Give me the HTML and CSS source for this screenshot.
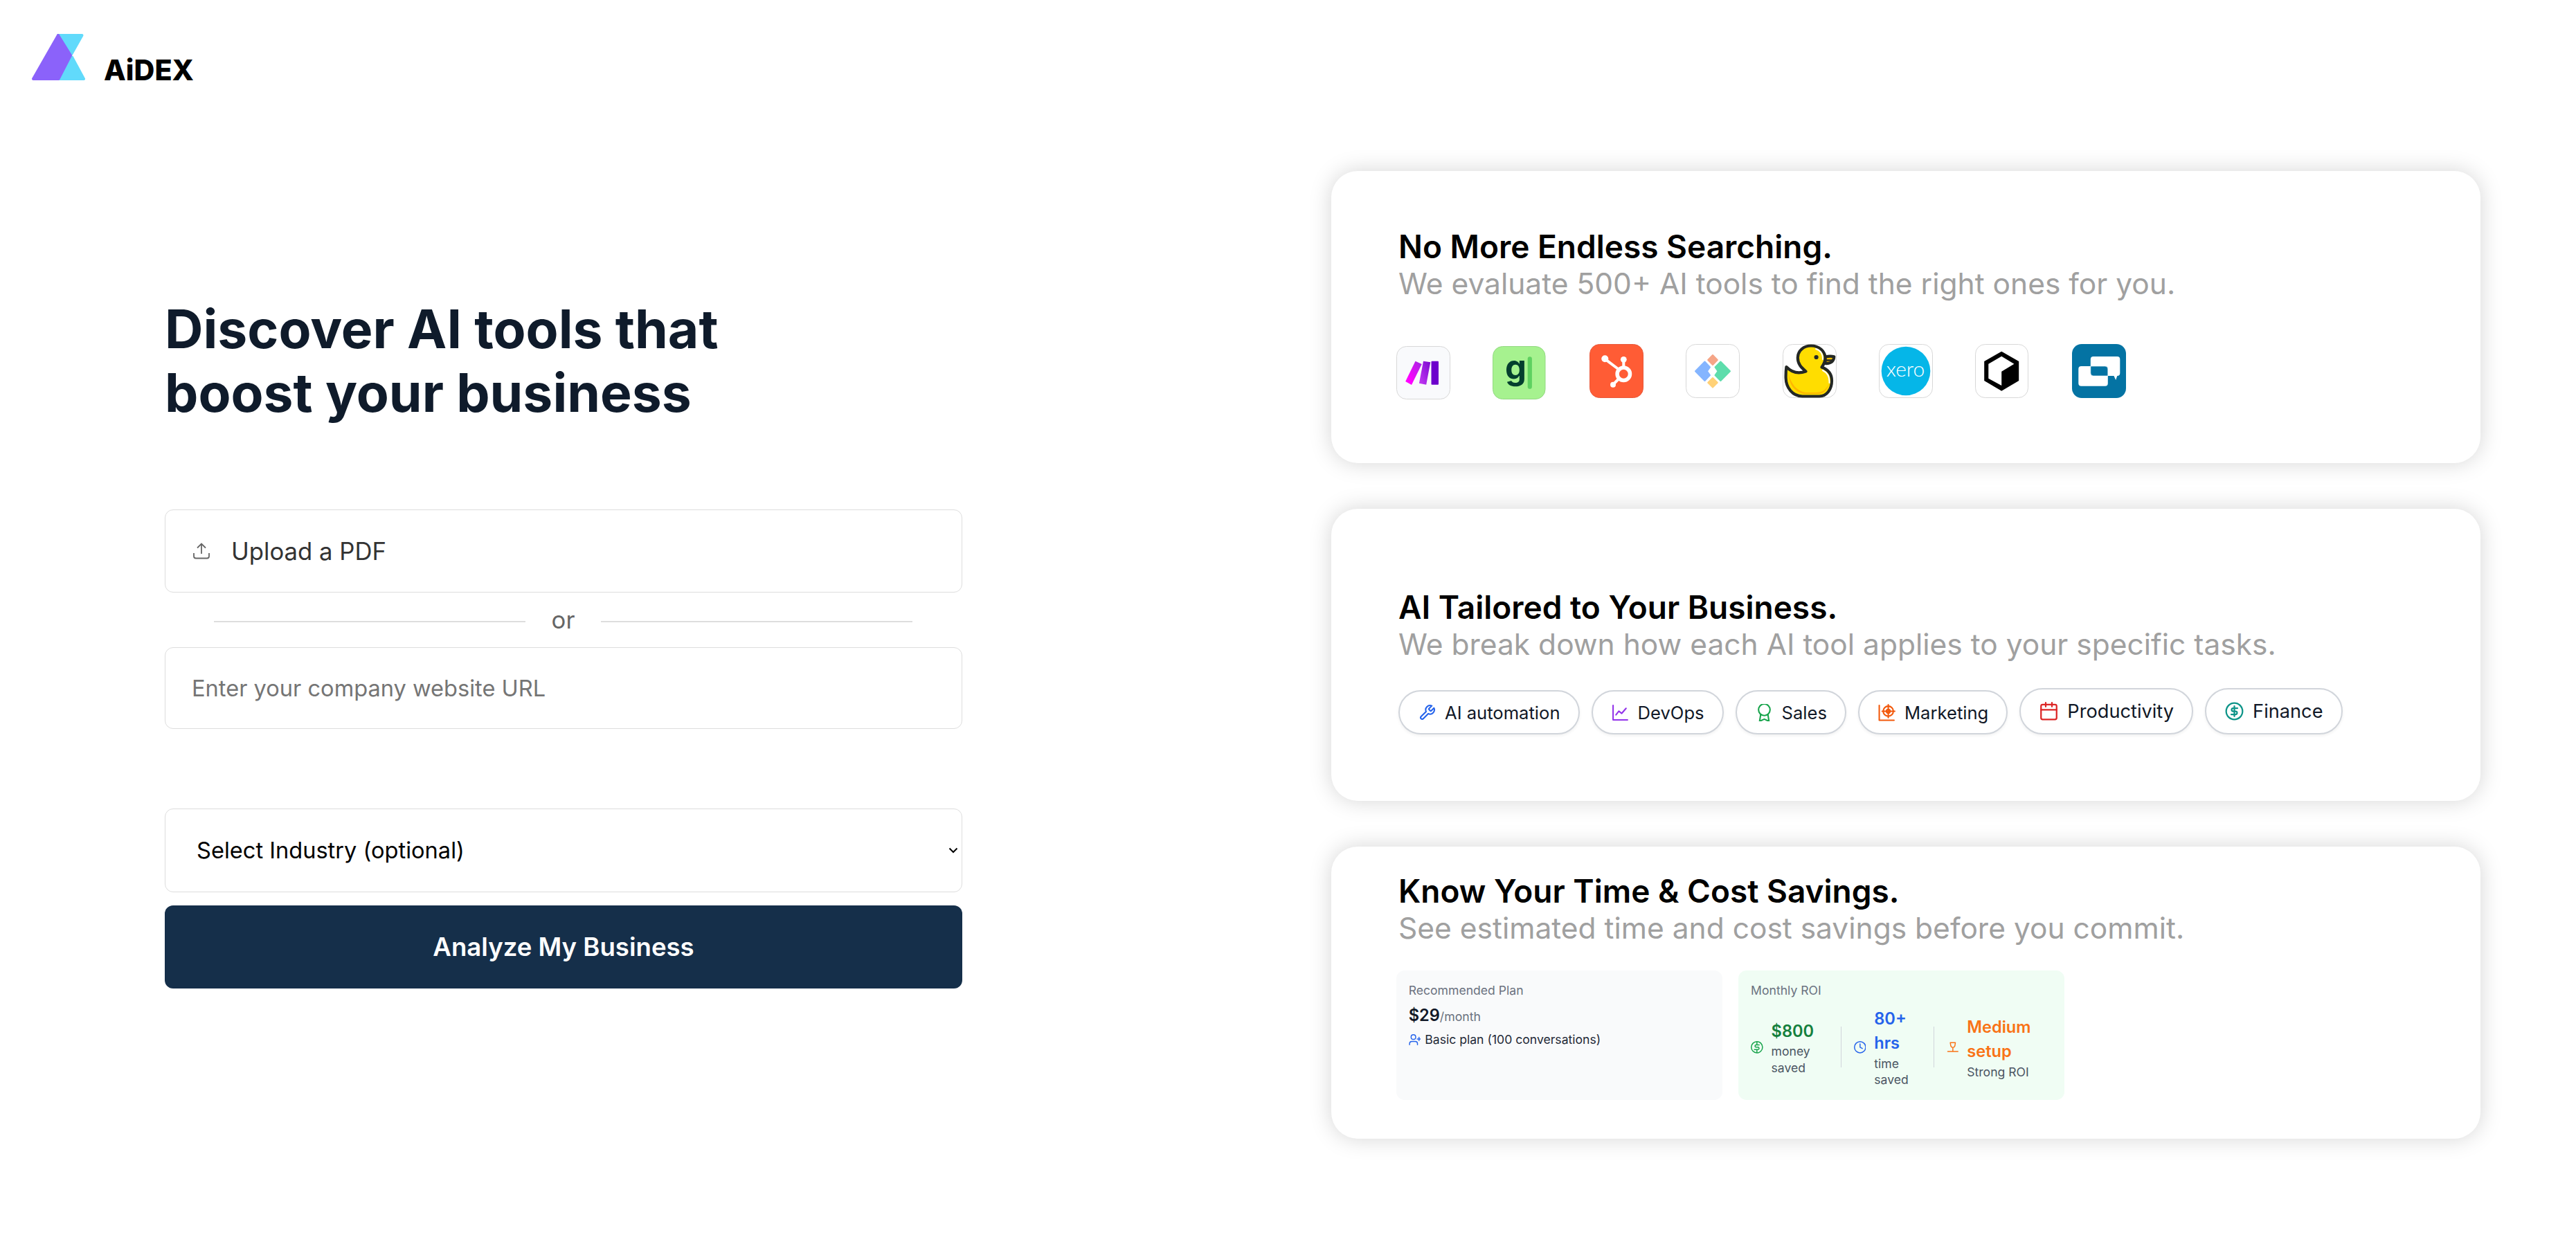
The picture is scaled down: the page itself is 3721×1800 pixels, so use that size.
FILE: index.html
```html
<!DOCTYPE html>
<html lang="en">
<head>
    <meta charset="UTF-8">
    <title>AiDEX</title>
    <link rel="stylesheet" href="styles.css">
</head>
<body>
    <header class="header">
        <svg class="brand-mark" viewBox="0 0 77 67">
            <path class="cyan" d="M38 2H72.5L57 29.5Z"/>
            <path class="cyan" d="M58 33.5L75 65H40Z"/>
            <path class="purple" d="M38 2L56 31L38.5 65H2Z"/>
        </svg>
        <span class="brand-name">AiDEX</span>
    </header>

    <main class="page">
        <section class="hero">
            <h1>Discover AI tools that<br>boost your business</h1>
            <form class="form">
                <label class="field upload">
                    <svg class="upload-icon" viewBox="0 0 24 24">
                        <path d="M1 15v4.5a3 3 0 0 0 3 3h16a3 3 0 0 0 3-3V15M12 16V1.5M6 7.5l6-6 6 6"/>
                    </svg>
                    <span>Upload a PDF</span>
                </label>
                <div class="divider"><span>or</span></div>
                <input class="field url" type="text" placeholder="Enter your company website URL">
                <div class="field select">
                    <span>Select Industry (optional)</span>
                    <svg class="arrow" viewBox="0 0 14 9"><path d="M1.5 1.5L7 7l5.5-5.5"/></svg>
                </div>
                <button class="submit" type="button">Analyze My Business</button>
            </form>
        </section>

        <section class="cards">
            <article class="card card-search">
                <h2>No More Endless Searching.</h2>
                <p class="sub">We evaluate 500+ AI tools to find the right ones for you.</p>
                <div class="logos">
                    <svg class="logo low" viewBox="0 0 78 77">
                        <defs>
                            <linearGradient id="make1" x1="0" y1="1" x2="1" y2="0"><stop offset=".25" stop-color="#ff00ff"/><stop offset="1" stop-color="#a02be0"/></linearGradient>
                            <linearGradient id="make2" x1="0" y1="1" x2="1" y2="0"><stop offset="0" stop-color="#c63cf5"/><stop offset="1" stop-color="#7a08cf"/></linearGradient>
                        </defs>
                        <rect class="tile" x=".5" y=".5" width="77" height="76" rx="14" fill="#f9fafc"/>
                        <path fill="url(#make1)" d="M27.5 21.7L36.8 26L22 56L13.2 51Z"/>
                        <path fill="url(#make2)" d="M39 21.7L49.3 23.3L43.2 55.7L32.9 53.7Z"/>
                        <rect x="50.5" y="21.7" width="10.5" height="34" rx="1" fill="#6d00cc"/>
                    </svg>
                    <svg class="logo low" viewBox="0 0 78 77">
                        <rect x=".5" y=".5" width="75.5" height="76" rx="14" fill="#a6f28f" stroke="#93d982"/>
                        <text class="logo-g" x="18" y="48">g</text>
                        <rect x="50.7" y="15.3" width="6.2" height="46.5" rx="3.1" fill="#5ed160"/>
                    </svg>
                    <svg class="logo" viewBox="0 0 78 78">
                        <rect x=".5" y=".5" width="77" height="77" rx="14" fill="#ff5c35" stroke="#e8583a"/>
                        <path d="M22 21.3L42 36.5M49.3 22.3V34M42.5 50L34 58.7" fill="none" stroke="#fff" stroke-width="4"/>
                        <circle cx="49.3" cy="43.3" r="9.2" fill="none" stroke="#fff" stroke-width="5.5"/>
                        <g fill="#fff"><circle cx="22.3" cy="21.3" r="5"/><circle cx="49.3" cy="22.3" r="4.4"/><circle cx="34" cy="58.7" r="4"/></g>
                    </svg>
                    <svg class="logo" viewBox="0 0 78 78">
                        <rect class="tile" x=".5" y=".5" width="77" height="77" rx="14" fill="#fff"/>
                        <g stroke-width="2" stroke-linejoin="round">
                            <path fill="#f5a587" stroke="#f5a587" d="M39 16L45.8 23L39 30L32.2 23Z"/>
                            <path fill="#ffd177" stroke="#ffd177" d="M39 49L45.8 55.8L39 62.6L32.2 55.8Z"/>
                            <path fill="#85b5ff" stroke="#85b5ff" d="M27.5 25.5L35 33.5L31 39.3L35 45L27.5 53L14 39.3Z"/>
                            <path fill="#5eddac" stroke="#5eddac" d="M50.4 25.5L64 39.3L50.4 53L42.5 45L46.5 39.3L42.5 33.5Z"/>
                        </g>
                    </svg>
                    <svg class="logo" viewBox="0 0 78 78">
                        <rect class="tile" x=".5" y=".5" width="77" height="77" rx="14" fill="#fff"/>
                        <g stroke="#242825" stroke-width="4.2" stroke-linejoin="round" stroke-linecap="round">
                            <path fill="#ffc400" d="M61.5 18.5C66 17.5 71 17.5 74.3 18.2C74 24 71 28.5 61.5 28Z"/>
                            <path fill="#ffdd00" d="M5.4 33C14 42 24 43 33.5 39.5C27 34 21.8 29 21.8 19.7C22 9 31 2.5 41 2.5C53 2.5 61.5 11 61.5 20C61.5 26 59 30 56.5 33.5C66 37 71 44 71 53C71 65 64 75.5 53 75.5H28.5C14 75 5 63 4.6 49C4.5 43 4.7 38 5.4 33Z"/>
                        </g>
                        <path d="M62 23.5H71" stroke="#242825" stroke-width="2.5"/>
                        <path d="M8.5 43C9 58 17 69 30 72H53C60 71 65 65 67 57C63 66 57 70 48 70H33C21 68 12 58 8.5 43Z" fill="#ffb700"/>
                        <path d="M58 38C66 42 68 49 67.5 56M48 7C55 9 58 15 58 22" fill="none" stroke="#fff" stroke-width="2" stroke-linecap="round"/>
                        <circle cx="48.6" cy="19" r="3.1" fill="#242825"/>
                    </svg>
                    <svg class="logo" viewBox="0 0 78 78">
                        <rect class="tile" x=".5" y=".5" width="77" height="77" rx="14" fill="#fff"/>
                        <circle cx="39" cy="39" r="35.3" fill="#05b6e8"/>
                        <text class="logo-xero" x="38.5" y="46.5" text-anchor="middle">xero</text>
                    </svg>
                    <svg class="logo" viewBox="0 0 78 78">
                        <rect class="tile" x=".5" y=".5" width="76" height="77" rx="14" fill="#fff"/>
                        <path d="M38.2 10.7L63.2 25V53L38.2 67.7L13.2 53V25Z"/>
                        <path fill="#fff" d="M38.2 17.7L56.4 28.7L38.2 39.7V60L19.3 49.7V28.7Z"/>
                    </svg>
                    <svg class="logo" viewBox="0 0 78 78">
                        <rect width="78" height="78" rx="14" fill="#0473a3"/>
                        <path fill="#fff" d="M30.8 18H65.3a4 4 0 0 1 4 4V42a4 4 0 0 1-4 4L63.2 52L60.5 46H30.8a4 4 0 0 1-4-4V22a4 4 0 0 1 4-4Z"/>
                        <rect x="9.3" y="32" width="42.5" height="28.7" rx="4" fill="#fff"/>
                        <path fill="#0473a3" stroke="#fff" stroke-width=".6" d="M26.8 32H47.8a4 4 0 0 1 4 4V46H30.8a4 4 0 0 1-4-4Z"/>
                    </svg>
                </div>
            </article>

            <article class="card card-tailored">
                <h2>AI Tailored to Your Business.</h2>
                <p class="sub">We break down how each AI tool applies to your specific tasks.</p>
                <div class="tags">
                    <span class="tag">
                        <svg class="icon blue" viewBox="0 0 24 24"><path d="M14.7 6.3a1 1 0 0 0 0 1.4l1.6 1.6a1 1 0 0 0 1.4 0l3.77-3.77a6 6 0 0 1-7.94 7.94l-6.91 6.91a2.12 2.12 0 0 1-3-3l6.91-6.91a6 6 0 0 1 7.94-7.94l-3.76 3.76z"/></svg>
                        AI automation
                    </span>
                    <span class="tag">
                        <svg class="icon violet" viewBox="0 0 24 24"><path d="M2 2v20h20M6 15l4-5 4 3 6-7"/></svg>
                        DevOps
                    </span>
                    <span class="tag">
                        <svg class="icon green" viewBox="0 0 24 24"><circle cx="12" cy="8" r="8"/><path d="M7 14.5L5.500 24l6.500-3 6.500 3L17 14.500"/></svg>
                        Sales
                    </span>
                    <span class="tag">
                        <svg class="icon orange" viewBox="0 0 24 24"><path d="M1.500 2v20.500H22M14 1v18M5.500 10h17.500"/><circle cx="14" cy="10" r="7"/><circle cx="14" cy="10" r="2.500"/></svg>
                        Marketing
                    </span>
                    <span class="tag tag-lg">
                        <svg class="icon red" viewBox="0 0 24 24"><rect x="2" y="3.500" width="20" height="19" rx="2"/><path d="M2 10h20M8 1v5M16 1v5"/></svg>
                        Productivity
                    </span>
                    <span class="tag tag-lg">
                        <svg class="icon teal" viewBox="0 0 24 24"><circle cx="12" cy="12" r="10.500"/><path d="M16 8h-5.500a2 2 0 0 0 0 4h3a2 2 0 0 1 0 4H8M12 5.500v13"/></svg>
                        Finance
                    </span>
                </div>
            </article>

            <article class="card card-savings">
                <h2>Know Your Time &amp; Cost Savings.</h2>
                <p class="sub">See estimated time and cost savings before you commit.</p>
                <div class="panels">
                    <div class="panel plan">
                        <div class="label">Recommended Plan</div>
                        <div class="price">$29<small>/month</small></div>
                        <div class="plan-name">
                            <svg class="icon blue" viewBox="0 0 24 24"><circle cx="9" cy="7" r="4.500"/><path d="M1.500 22v-2a4.500 4.500 0 0 1 4.500-4.500h6.500A4.500 4.500 0 0 1 17 20v2M20 7.500v6.500M16.500 11H23.500"/></svg>
                            Basic plan (100 conversations)
                        </div>
                    </div>
                    <div class="panel roi">
                        <div class="label">Monthly ROI</div>
                        <div class="stats">
                            <div class="stat stat-money">
                                <svg class="icon green" viewBox="0 0 24 24"><circle cx="12" cy="12" r="11"/><path d="M16.500 7.500h-6a2.200 2.200 0 0 0 0 4.500h3.500a2.200 2.200 0 0 1 0 4.500H7M12 2v5.500M12 16.500V22"/></svg>
                                <div><b>$800</b><span>money saved</span></div>
                            </div>
                            <div class="stat stat-time">
                                <svg class="icon blue" viewBox="0 0 24 24"><circle cx="12" cy="12" r="11"/><path d="M12 5.500V12l4.500 2.500"/></svg>
                                <div><b>80+ hrs</b><span>time saved</span></div>
                            </div>
                            <div class="stat stat-setup">
                                <svg class="icon amber" viewBox="0 0 24 24"><path d="M2 20.500h20M12 20.500V13M7 3h10l-1 6.500a4.200 4.200 0 0 1-8 0z"/></svg>
                                <div><b>Medium setup</b><span>Strong ROI</span></div>
                            </div>
                        </div>
                    </div>
                </div>
            </article>
        </section>
    </main>
</body>
</html>
```
FILE: styles.css
```css
* {
    box-sizing: border-box;
}
body {
    margin: 0;
    min-height: 1800px;
    background: #fff;
    font-family: Inter, "Liberation Sans", sans-serif;
    color: #000;
}
h1, h2, p {
    margin: 0;
}
.header {
    height: 116px;
    padding-left: 46px;
    display: flex;
    align-items: flex-end;
    gap: 27px;
}
.brand-mark {
    width: 77px;
    height: 67px;
}
.brand-mark path {
    stroke-width: 4;
    stroke-linejoin: round;
}
.brand-mark .cyan {
    fill: #61dafb;
    stroke: #61dafb;
}
.brand-mark .purple {
    fill: #8b62fa;
    stroke: #8b62fa;
}
.brand-name {
    font-size: 41.3px;
    font-weight: 800;
    line-height: 30px;
}
.page {
    display: flex;
    align-items: flex-start;
    padding-left: 238px;
}

/* left column */
.hero {
    width: 1152px;
    margin-top: 314px;
    margin-right: 533px;
}
h1 {
    font-size: 76.8px;
    font-weight: 700;
    line-height: 92px;
    color: #0f1b2b;
    margin-bottom: 122px;
}
.form {
    display: flex;
    flex-direction: column;
}
.field {
    height: 120px;
    border: 1px solid #ddd;
    border-radius: 12px;
    background: #fff;
    display: flex;
    align-items: center;
    font-family: inherit;
    font-size: 32.6px;
}
.upload {
    padding: 0 0 1px 40px;
    gap: 31px;
    font-size: 34.7px;
    color: #333;
}
.upload-icon {
    width: 24px;
    height: 24px;
    fill: none;
    stroke: #666;
    stroke-width: 1.8;
}
.divider {
    height: 79px;
    padding: 5px 72px 0 71px;
    display: flex;
    align-items: center;
    gap: 38px;
    font-size: 34.7px;
    color: #666;
}
.divider::before,
.divider::after {
    content: "";
    flex: 1;
    height: 2px;
    background: #ddd;
}
.divider span {
    margin-top: -6px;
}
.url {
    height: 118px;
    padding: 0 38px;
    margin-bottom: 115px;
}
.url::placeholder {
    color: #757575;
    opacity: 1;
}
.select {
    height: 121px;
    padding: 0 5px 1px 45px;
    justify-content: space-between;
    margin-bottom: 19px;
}
.arrow {
    width: 14px;
    height: 9px;
    fill: none;
    stroke: #000;
    stroke-width: 2;
}
.submit {
    height: 120px;
    border: none;
    border-radius: 12px;
    background: #152f4a;
    color: #fff;
    font-family: inherit;
    font-size: 36.6px;
    font-weight: 600;
}

/* right column */
.cards {
    width: 1660px;
    margin-top: 131px;
    display: flex;
    flex-direction: column;
    gap: 66px;
}
.card {
    height: 422px;
    padding-left: 97px;
    border-radius: 38px;
    background: #fff;
    box-shadow: 0 0 32px rgba(0, 0, 0, 0.17);
}
.card-search {
    padding-top: 83px;
}
.card-tailored {
    padding-top: 116px;
}
.card-savings {
    padding-top: 38px;
}
h2 {
    font-size: 46px;
    font-weight: 600;
    line-height: 53px;
}
.sub {
    font-size: 42.5px;
    line-height: 53px;
    color: #a0a0a0;
}
.logos {
    display: flex;
    align-items: flex-start;
    gap: 61.4px;
    margin: 61px 0 0 -3px;
}
.logo {
    width: 78px;
    height: 78px;
    overflow: visible;
}
.logo.low {
    height: 77px;
    margin-top: 3px;
}
.tile {
    stroke: #d8d8d8;
}
.logo-g {
    font-size: 49px;
    font-weight: 700;
    fill: #043f2e;
}
.logo-xero {
    font-family: Lato, sans-serif;
    font-size: 30px;
    font-weight: 300;
    fill: #fff;
}
.tags {
    display: flex;
    align-items: flex-end;
    gap: 17px;
    margin: 37px 0 0;
}
.tag {
    height: 64px;
    padding: 0 26px 0 27px;
    display: flex;
    align-items: center;
    gap: 13px;
    border: 2px solid #d1d5db;
    border-radius: 32px;
    background: #fff;
    box-shadow: 0 2px 4px rgba(0, 0, 0, 0.06);
    font-size: 25.6px;
    color: #111827;
}
.tag .icon {
    width: 25px;
    height: 25px;
}
.tag-lg {
    height: 67px;
    border-radius: 34px;
    font-size: 27.2px;
}
.tag-lg .icon {
    width: 27px;
    height: 27px;
}
.icon {
    flex: none;
    fill: none;
    stroke: currentColor;
    stroke-width: 2;
    stroke-linecap: round;
    stroke-linejoin: round;
}
.blue { color: #2563eb; }
.violet { color: #9333ea; }
.green { color: #16a34a; }
.orange { color: #f2590c; }
.red { color: #dc2626; }
.teal { color: #0d9488; }
.amber { color: #f97316; }

.panels {
    display: flex;
    gap: 23.7px;
    margin: 35px 0 0 -3px;
}
.panel {
    width: 470.7px;
    height: 187px;
    padding: 17.4px 17.7px;
    border-radius: 11.8px;
    font-size: 17.6px;
    line-height: 23.6px;
}
.plan {
    background: #f9fafb;
}
.roi {
    background: #f0fdf4;
}
.label {
    color: #6b7280;
}
.price {
    margin-top: 6px;
    font-size: 23.6px;
    font-weight: 600;
    line-height: 35.4px;
    color: #111827;
}
.price small {
    font-size: 17.7px;
    font-weight: 400;
    color: #6b7280;
}
.plan-name {
    margin-top: 4px;
    display: flex;
    align-items: center;
    gap: 5.9px;
    color: #1f2937;
}
.panel .icon {
    width: 17.7px;
    height: 17.7px;
}
.stats {
    display: flex;
    align-items: center;
    height: 118px;
    margin-top: 11px;
}
.stat {
    display: flex;
    align-items: center;
    gap: 11.8px;
    height: 59px;
}
.stat b {
    display: block;
    font-size: 23.6px;
    font-weight: 600;
    line-height: 35.4px;
}
.stat span {
    display: block;
    color: #4b5563;
}
.stat-money {
    width: 130px;
    padding-right: 40px;
}
.stat-time {
    width: 134px;
    padding: 0 34px 0 17.7px;
    border-left: 1.5px solid #d1d5db;
}
.stat-setup {
    width: 154px;
    padding-left: 17.7px;
    border-left: 1.5px solid #d1d5db;
}
.stat-money b { color: #15803d; }
.stat-time b { color: #2563eb; }
.stat-setup b { color: #f97316; }
```
